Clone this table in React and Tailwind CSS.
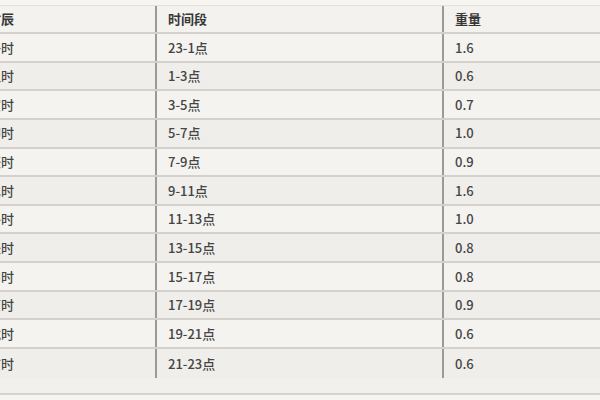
import React from "react";

const rows = [
  ["子时", "23-1点", "1.6"],
  ["丑时", "1-3点", "0.6"],
  ["寅时", "3-5点", "0.7"],
  ["卯时", "5-7点", "1.0"],
  ["辰时", "7-9点", "0.9"],
  ["巳时", "9-11点", "1.6"],
  ["午时", "11-13点", "1.0"],
  ["未时", "13-15点", "0.8"],
  ["申时", "15-17点", "0.8"],
  ["酉时", "17-19点", "0.9"],
  ["戌时", "19-21点", "0.6"],
  ["亥时", "21-23点", "0.6"],
];

export default function App() {
  return (
    <div
      className="w-[600px] h-[400px] overflow-hidden bg-[#f4f3ef] text-[13px] text-[#454545] font-medium"
      style={{ fontFamily: '"Noto Sans CJK SC", "Noto Sans", sans-serif' }}
    >
      <div className="h-[6px] border-b border-[#e4e1dc] bg-[#f6f5f2]" />
      <div className="ml-[-24px] w-[640px]">
        <div className="grid grid-cols-[181px_287px_1fr] h-[28px] items-center border-b-2 border-[#d4d1cc] bg-[#f3f2ee] font-bold text-[#383838]">
          <div className="pl-[12px] h-full flex items-center border-r-2 border-[#9c9a96]">时辰</div>
          <div className="pl-[11px] h-full flex items-center border-r-2 border-[#9c9a96]">时间段</div>
          <div className="pl-[11px] h-full flex items-center">重量</div>
        </div>
        {rows.map((r, i) => (
          <div
            key={i}
            className={
              "grid grid-cols-[181px_287px_1fr] h-[28.65px] items-center " +
              (i < rows.length - 1 ? "border-b-2 border-[#d4d1cc] " : "") +
              (i % 2 === 0 ? "bg-[#f4f3ef]" : "bg-[#efeeea]")
            }
          >
            <div className="pl-[12px] h-full flex items-center border-r-2 border-[#9c9a96]">{r[0]}</div>
            <div className="pl-[11px] h-full flex items-center border-r-2 border-[#9c9a96]">{r[1]}</div>
            <div className="pl-[11px] h-full flex items-center">{r[2]}</div>
          </div>
        ))}
      </div>
      <div className="h-[15px] bg-[#f1f0ec]" />
      <div className="h-[2px] bg-[#d6d3ce]" />
      <div className="h-[8px] bg-[#f6f5f2]" />
    </div>
  );
}
